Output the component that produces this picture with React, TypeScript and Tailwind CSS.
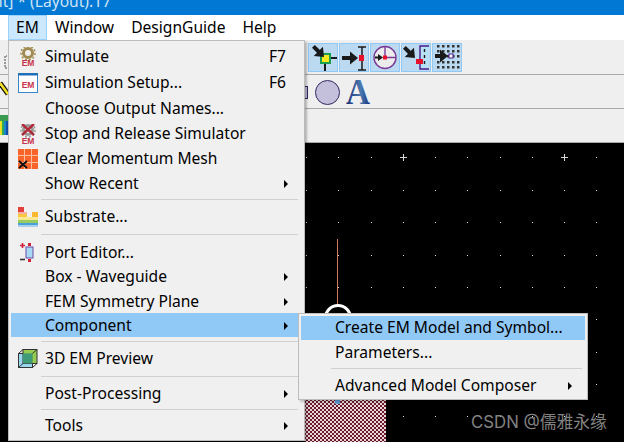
import { ReactNode } from 'react';

const FONT = "font-['Noto_Sans','Open_Sans',sans-serif]";

function EmLabel({ y = 16, size = 8 }: { y?: number; size?: number }) {
  return (
    <text x="10" y={y} textAnchor="middle" fontSize={size} fontWeight="700" fill="#c8324a" fontFamily="Liberation Sans, sans-serif">
      EM
    </text>
  );
}

function Gear({ cx, cy, color }: { cx: number; cy: number; color: string }) {
  return (
    <g>
      <circle cx={cx} cy={cy} r="4.5" fill="none" stroke={color} strokeWidth="3" />
      <circle cx={cx} cy={cy} r="7" fill="none" stroke={color} strokeWidth="1.5" strokeDasharray="2 2" />
    </g>
  );
}

const SimulateIcon = () => (
  <svg width="20" height="20" viewBox="0 0 20 20">
    <Gear cx={10} cy={6} color="#a08a50" />
    <EmLabel y={19} size={8.5} />
  </svg>
);

const SetupIcon = () => (
  <svg width="20" height="20" viewBox="0 0 20 20">
    <rect x="0.5" y="0.5" width="19" height="19" fill="#fff" stroke="#3b87c8" />
    <rect x="0" y="0" width="20" height="2.5" fill="#1f70b8" />
    <EmLabel y={14.5} size={8.5} />
  </svg>
);

const StopIcon = () => (
  <svg width="20" height="20" viewBox="0 0 20 20">
    <Gear cx={10} cy={6} color="#9a9a9a" />
    <path d="M4 0 L16 11 M16 0 L4 11" stroke="#b02a3a" strokeWidth="2.4" />
    <EmLabel y={19.5} size={8.5} />
  </svg>
);

const MeshIcon = () => (
  <svg width="20" height="20" viewBox="0 0 20 20">
    <rect width="20" height="20" fill="#fbbf9f" />
    {[0, 7, 14].flatMap((y) =>
      [0, 7, 14].map((x) => <rect key={`${x}-${y}`} x={x} y={y} width="6" height="6" fill="#f8642a" />),
    )}
    <path d="M1 12 L9 19 M9 12 L1 19" stroke="#111" strokeWidth="2" />
  </svg>
);

const SubstrateIcon = () => (
  <svg width="20" height="20" viewBox="0 0 20 20">
    <rect x="0" y="0" width="6" height="5" fill="#e2403a" />
    <rect x="0" y="5" width="9" height="2" fill="#f4b0a0" />
    <rect x="14" y="5" width="6" height="5" fill="#f8b830" />
    <rect x="0" y="7" width="9" height="3" fill="#f8c840" />
    <rect x="0" y="10" width="20" height="3" fill="#f8e890" />
    <rect x="0" y="13" width="20" height="3" fill="#98cc60" />
    <rect x="0" y="16" width="20" height="2" fill="#4aa0d8" />
    <rect x="0" y="18" width="20" height="2" fill="#a8d0ee" />
  </svg>
);

const PortIcon = () => (
  <svg width="20" height="20" viewBox="0 0 20 20">
    <rect x="8" y="4" width="7" height="11" fill="#a8d8f4" stroke="#6a4aa0" />
    <rect x="10" y="0" width="3" height="3" fill="#d0203a" />
    <rect x="10" y="16" width="3" height="3" fill="#d0203a" />
    <path d="M2 2.5 H7 M4.5 0 V5" stroke="#d0203a" strokeWidth="1.6" />
    <path d="M2 16.5 H7" stroke="#333" strokeWidth="1.6" />
  </svg>
);

const CubeIcon = () => (
  <svg width="20" height="20" viewBox="0 0 20 20">
    <rect x="0.5" y="4.5" width="14" height="14" fill="#9ad8f0" stroke="#333" />
    <rect x="5" y="0.5" width="14" height="14" fill="#8cc63f" fillOpacity="0.9" stroke="#333" />
    <rect x="5" y="4.5" width="9.5" height="10" fill="#3f9a78" />
    <path d="M0.5 4.5 L5 0.5 M14.5 4.5 L19 0.5 M14.5 18.5 L19 14.5 M0.5 18.5 L5 14.5" stroke="#333" fill="none" />
  </svg>
);

function MenuRow({
  h,
  label,
  icon,
  shortcut,
  arrow,
  active,
}: {
  h: string;
  label: string;
  icon?: ReactNode;
  shortcut?: string;
  arrow?: boolean;
  active?: boolean;
}) {
  return (
    <div className={`flex items-center ${h} ${active ? 'bg-[#90c8f6]' : ''}`}>
      <div className="flex w-[34px] shrink-0 justify-center pr-[1px]">{icon}</div>
      <span className="flex-1 whitespace-nowrap">{label}</span>
      {shortcut && <span className="mr-[15px]">{shortcut}</span>}
      {arrow && (
        <span className="mr-[13px] h-0 w-0 border-y-[4px] border-l-[4px] border-y-transparent border-l-black" />
      )}
    </div>
  );
}

const Sep = ({ h }: { h: string }) => (
  <div className={`flex items-center pl-[30px] pr-[3px] ${h}`}>
    <div className="h-px flex-1 bg-[#d0d0d0]" />
  </div>
);

const ToolButton = ({ children }: { children: ReactNode }) => (
  <div className="flex h-[29px] w-[30px] items-center justify-center border border-[#90c8f6] bg-[#bbdaf2]">{children}</div>
);

function Arrow({ x, y, rotate = 0, len = 14 }: { x: number; y: number; rotate?: number; len?: number }) {
  return (
    <g transform={`translate(${x} ${y}) rotate(${rotate})`}>
      <rect x={-len} y="-2" width={len - 6} height="4" fill="#1a1a1a" />
      <path d="M-8 -6.5 L0 0 L-8 6.5 Z" fill="#1a1a1a" />
    </g>
  );
}

const Tool1 = () => (
  <svg width="28" height="27" viewBox="0 0 28 27">
    <path d="M16 14 V27 M16 14 H28" stroke="#1a1a1a" strokeWidth="2" />
    <rect x="12" y="10" width="9" height="9" fill="#f8e820" stroke="#18a050" strokeWidth="2" />
    <Arrow x={15} y={13} rotate={45} len={15} />
  </svg>
);

const Tool2 = () => (
  <svg width="28" height="27" viewBox="0 0 28 27">
    <path d="M22 3 V26 M18 3 H26 M18 26 H26" stroke="#1a1a1a" strokeWidth="1.5" />
    <rect x="19" y="11" width="5" height="6" fill="#e8102a" />
    <Arrow x={18} y={14} len={16} />
  </svg>
);

const Tool3 = () => (
  <svg width="26" height="27" viewBox="0 0 26 27">
    <circle cx="13" cy="13.5" r="11" fill="#ececec" stroke="#7a3a98" strokeWidth="1.4" />
    <path d="M13 2.5 V13.5 H24" stroke="#7a3a98" strokeWidth="1.4" fill="none" />
    <rect x="11" y="11.5" width="4" height="4" fill="#e8102a" />
    <g transform="translate(11 13.5)">
      <rect x="-8" y="-1" width="4" height="2" fill="#1a1a1a" />
      <path d="M-5 -3.5 L0 0 L-5 3.5 Z" fill="#1a1a1a" />
    </g>
  </svg>
);

const Tool4 = () => (
  <svg width="28" height="27" viewBox="0 0 28 27">
    <rect x="18" y="2" width="9" height="23" fill="#b6e0f6" />
    <path d="M27 2 H18 V25 H27" stroke="#4a1a88" strokeWidth="1.4" fill="none" />
    <path d="M22.5 5 V23" stroke="#1a1a1a" strokeWidth="1.4" strokeDasharray="3 3" />
    <rect x="14" y="15" width="7" height="5" fill="#e8102a" />
    <Arrow x={13} y={14} rotate={45} len={15} />
  </svg>
);

const Tool5 = () => (
  <svg width="28" height="27" viewBox="0 0 28 27">
    {[1, 6, 11, 17, 22].flatMap((y) =>
      [4, 9, 14, 19, 24].map((x) => <rect key={`${x}-${y}`} x={x} y={y} width="2.5" height="2.5" fill="#333" />),
    )}
    <rect x="16" y="10" width="4" height="4" fill="#fff" stroke="#4a1a88" />
    <Arrow x={15} y={12} len={13} />
  </svg>
);

const gridX = [306, 338, 371, 403, 435, 467, 500, 532, 564, 596];
const gridY = [14, 47, 79, 112, 144, 176, 209, 241, 273];

function Canvas() {
  return (
    <svg width="624" height="299" viewBox="0 0 624 299" className="block">
      <rect width="624" height="299" fill="#000" />
      {gridY.flatMap((y) => gridX.map((x) => <rect key={`${x}:${y}`} x={x} y={y} width="1" height="1" fill="#d8d8d8" />))}
      <path d="M400 14.5 H407 M403.5 11 V18 M561 14.5 H568 M564.5 11 V18" stroke="#d8d8d8" />
      <path d="M337.5 96 V162" stroke="#d87868" />
      <defs>
        <pattern id="checker" width="4" height="4" patternUnits="userSpaceOnUse">
          <rect width="4" height="4" fill="#6a1a2a" />
          <rect width="2" height="2" fill="#e8d8dc" />
          <rect x="2" y="2" width="2" height="2" fill="#e8d8dc" />
        </pattern>
      </defs>
      <circle cx="338" cy="175" r="12.5" fill="none" stroke="#fff" strokeWidth="3" />
      <rect x="305" y="257" width="81" height="42" fill="url(#checker)" />
      <rect x="335" y="257" width="5" height="4" fill="#5a9ad8" />
    </svg>
  );
}

export default function App() {
  return (
    <div className={`relative flex h-[442px] w-[624px] flex-col overflow-hidden bg-[#f0f0f0] text-[15.6px] leading-none text-black ${FONT}`}>
      {/* Title bar */}
      <div className="h-[15px] shrink-0 overflow-hidden bg-[#0078d4]">
        <div className="ml-[-7px] mt-[-6px] whitespace-nowrap text-[#cfe4f6]">nt] * (Layout).17</div>
      </div>

      {/* Menu bar */}
      <div className="flex h-[25px] shrink-0 items-center bg-white pl-[8px]">
        <div className="flex h-full w-[39px] items-center justify-center border border-[#99d1ff] bg-[#cce8ff]">EM</div>
        <span className="ml-[8px]">Window</span>
        <span className="ml-[17px]">DesignGuide</span>
        <span className="ml-[17px]">Help</span>
      </div>

      {/* Toolbars */}
      <div className="flex h-[35px] shrink-0 items-center justify-start gap-[1px] border-b border-[#a8a8a8] bg-[#efefef] pl-[308px]">
        <ToolButton><Tool1 /></ToolButton>
        <ToolButton><Tool2 /></ToolButton>
        <ToolButton><Tool3 /></ToolButton>
        <ToolButton><Tool4 /></ToolButton>
        <ToolButton><Tool5 /></ToolButton>
      </div>
      <div className="flex h-[34px] shrink-0 items-center border-b border-[#a8a8a8] bg-[#efefef] pl-[305px] pt-[1px]">
        <div className="h-[13px] w-[3px] border border-l-0 border-[#2f2a60] bg-[#c4c0dc]" />
        <div className="ml-[7px] h-[25px] w-[25px] rounded-full border border-[#2f2a60] bg-[#c4c0dc]" />
        <svg width="32" height="30" viewBox="0 0 32 30" className="ml-[2px]">
          <defs>
            <linearGradient id="letter" x1="0" y1="0" x2="1" y2="0">
              <stop offset="0" stopColor="#1a2a78" />
              <stop offset="0.6" stopColor="#4a7ab0" />
              <stop offset="1" stopColor="#1a2a78" />
            </linearGradient>
          </defs>
          <text x="16" y="27" textAnchor="middle" fontSize="35" fontWeight="700" fontFamily="Liberation Serif, serif" textLength="24" lengthAdjust="spacingAndGlyphs" fill="url(#letter)">
            A
          </text>
        </svg>
      </div>
      <div className="h-[34px] shrink-0 border-b border-[#a8a8a8] bg-[#efefef]" />

      {/* Layout canvas */}
      <div className="flex-1 overflow-hidden bg-black">
        <Canvas />
      </div>

      {/* Bits of the left toolbars not covered by the menu */}
      <svg width="8" height="100" viewBox="0 0 8 100" className="absolute left-0 top-[42px]">
        <path d="M6 14 H7 M5 14 V26 M5 26 H7" stroke="#444" strokeDasharray="2 1" fill="none" />
        <path d="M0 41 L8 52" stroke="#111" strokeWidth="5" />
        <path d="M0 41 L8 52" stroke="#f0e020" strokeWidth="2.5" />
        <rect x="0" y="73" width="8" height="6" fill="#3a9a50" />
        <rect x="0" y="79" width="2" height="14" fill="#e8e020" />
        <rect x="2" y="79" width="2" height="14" fill="#30a858" />
        <rect x="4" y="79" width="2" height="14" fill="#1a88c8" />
        <rect x="6" y="79" width="2" height="14" fill="#1050a8" />
      </svg>

      {/* EM menu */}
      <div className="absolute left-[8px] top-[40px] w-[297px] border border-[#bcbcbc] bg-[#f0f0f0] pl-[2px] pr-[3px] pt-[3px] shadow-[2px_2px_2px_rgba(0,0,0,0.25)]">
        <MenuRow h="h-[26px]" label="Simulate" icon={<SimulateIcon />} shortcut="F7" />
        <MenuRow h="h-[26px]" label="Simulation Setup..." icon={<SetupIcon />} shortcut="F6" />
        <MenuRow h="h-[25px]" label="Choose Output Names..." />
        <MenuRow h="h-[25px]" label="Stop and Release Simulator" icon={<StopIcon />} />
        <MenuRow h="h-[25px]" label="Clear Momentum Mesh" icon={<MeshIcon />} />
        <MenuRow h="h-[25px]" label="Show Recent" arrow />
        <Sep h="h-[7px]" />
        <MenuRow h="h-[28px]" label="Substrate..." icon={<SubstrateIcon />} />
        <Sep h="h-[7px]" />
        <MenuRow h="h-[27px] pt-[3px]" label="Port Editor..." icon={<PortIcon />} />
        <MenuRow h="h-[24px]" label="Box - Waveguide" arrow />
        <MenuRow h="h-[24px] pt-[1px]" label="FEM Symmetry Plane" arrow />
        <MenuRow h="h-[24px] pt-[1px]" label="Component" arrow active />
        <Sep h="h-[9px]" />
        <MenuRow h="h-[26px]" label="3D EM Preview" icon={<CubeIcon />} />
        <Sep h="h-[9px]" />
        <MenuRow h="h-[25px]" label="Post-Processing" arrow />
        <Sep h="h-[7px]" />
        <MenuRow h="h-[27px] pb-[1px]" label="Tools" arrow />
      </div>

      {/* Component submenu */}
      <div className="absolute left-[298px] top-[313px] w-[290px] border border-[#bcbcbc] bg-[#f0f0f0] pl-[2px] pr-[2px] pt-[2px] shadow-[2px_2px_2px_rgba(0,0,0,0.2)]">
        <MenuRow h="h-[24px]" label="Create EM Model and Symbol..." active />
        <MenuRow h="h-[25px]" label="Parameters..." />
        <Sep h="h-[7px]" />
        <MenuRow h="h-[27px]" label="Advanced Model Composer" arrow />
      </div>

      {/* Watermark */}
      <div className="absolute left-[471px] top-[413px] whitespace-nowrap font-['Inter','Noto_Sans_CJK_SC',sans-serif] text-[16.8px] leading-[18px] text-[#828282]">
        CSDN @儒雅永缘
      </div>
    </div>
  );
}
